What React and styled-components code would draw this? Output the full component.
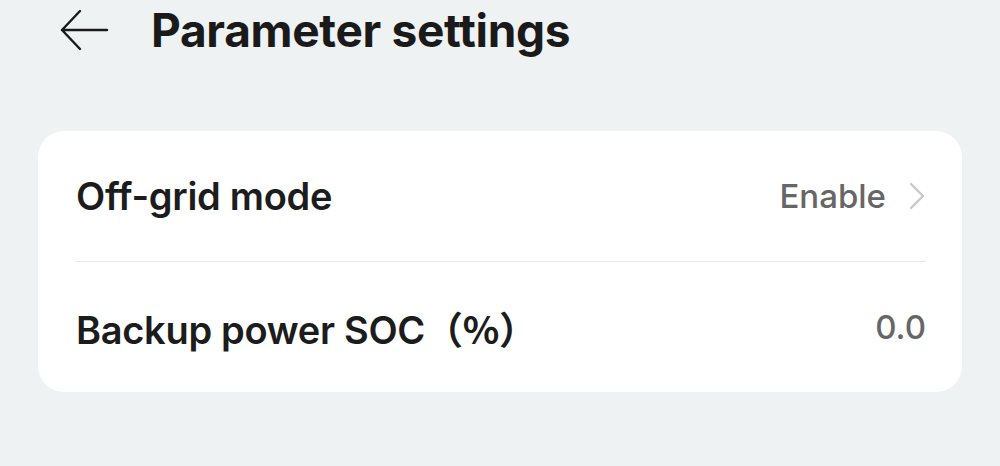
import React from 'react';
import styled, { createGlobalStyle } from 'styled-components';

const GlobalStyle = createGlobalStyle`
    html, body {
        margin: 0;
        padding: 0;
        background: #eff2f3;
        font-family: Inter, "Noto Sans", "Noto Sans CJK SC", sans-serif;
    }
`

const Page = styled.div`
    width: 1000px;
    height: 466px;
    box-sizing: border-box;
    padding: 0 38px;
    display: flex;
    flex-direction: column;
`

const Header = styled.header`
    height: 60px;
    display: flex;
    align-items: center;
    gap: 42px;
    padding-left: 21px;
    margin-bottom: 71px;
`

const BackButton = styled.button`
    width: 50px;
    height: 44px;
    padding: 0;
    border: none;
    background: transparent;
    display: flex;
    align-items: center;
    cursor: pointer;
`

const Title = styled.h1`
    margin: 0;
    font-size: 46px;
    font-weight: 700;
    color: #1a1a1a;
    letter-spacing: -0.3px;
`

const Card = styled.section`
    background: #ffffff;
    border-radius: 26px;
    padding: 0 36px 0 38px;
`

const Row = styled.div`
    height: 130px;
    display: flex;
    align-items: center;
    justify-content: space-between;
    border-top: ${p => (p.$first ? 'none' : '1px solid #e4e6e7')};
`

const Label = styled.span`
    font-size: 38px;
    font-weight: 600;
    color: #1c1c1c;
    letter-spacing: -0.3px;
`

const Paren = styled.span`
    font-family: "Noto Sans CJK SC", sans-serif;
    font-weight: 600;
`

const Value = styled.span`
    display: flex;
    align-items: center;
    gap: 22px;
    font-size: 33px;
    font-weight: 500;
    color: #666666;
`

const BackArrow = () => (
    <svg width="50" height="44" viewBox="0 0 50 44">
        <path d="M48 22 H3 M21 3 L3 22 L21 41" fill="none" stroke="#1a1a1a" strokeWidth="2.4" strokeLinecap="round" strokeLinejoin="round" />
    </svg>
)

const Chevron = () => (
    <svg width="18" height="30" viewBox="0 0 18 30">
        <path d="M3 3 L15 15 L3 27" fill="none" stroke="#c6c8c9" strokeWidth="2.4" strokeLinecap="round" strokeLinejoin="round" />
    </svg>
)

const App = () => {
    return (
        <Page>
            <GlobalStyle />
            <Header>
                <BackButton aria-label='Back'>
                    <BackArrow />
                </BackButton>
                <Title>Parameter settings</Title>
            </Header>
            <Card>
                <Row $first>
                    <Label>Off-grid mode</Label>
                    <Value>Enable<Chevron /></Value>
                </Row>
                <Row>
                    <Label>Backup power SOC<Paren>（%）</Paren></Label>
                    <Value>0.0</Value>
                </Row>
            </Card>
        </Page>
    )
}

export default App
